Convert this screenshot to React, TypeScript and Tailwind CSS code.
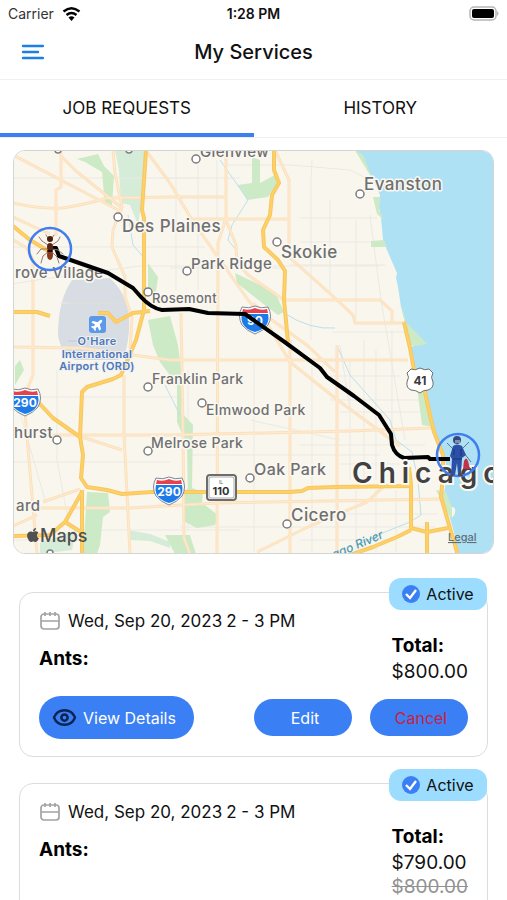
import { Eye } from "lucide-react";
import { FaApple, FaPlane } from "react-icons/fa";

const PARKS = [
  "M77 159L98 154L104 166L114 176L112 205L105 205L102 172L85 162Z",
  "M148 263L158 277L156 292L148 296Z",
  "M148 320L170 316L178 345L181 368L181 412L193 425L192 488L203 492L202 503L218 515L215 525L197 528L185 522L185 492L188 488L187 445L177 422L177 385L160 362L153 345Z",
  "M252 157L260 160L260 183L275 175L277 184L268 197L247 200L238 185L252 183Z",
  "M235 273L275 292L284 312L278 315L262 303L237 283Z",
  "M87 492L108 493L110 512L103 517L100 545L97 554L83 554Z",
  "M15 366L20 360L24 370L15 385Z",
  "M355 150L363 155L373 180L364 165Z",
  "M373 197L380 197L379 210L384 220L377 214Z",
  "M371 241L384 240L387 247L371 247Z",
  "M401 303L406 322L427 344L416 346L409 345Z",
  "M416 380L425 388L434 427L422 425Z",
  "M436 490L446 492L455 515L450 518Z",
  "M165 535L190 535L196 554L175 554Z",
];

const PALE_PARKS = [
  "M115 150L145 150L142 200L138 225L130 205L121 203L119 170Z",
  "M128 530L150 534L170 542L170 548L150 541L130 540Z",
  "M40 543L76 530L72 550L40 554Z",
];

const STREETS = [
  "M12 178H200", "M12 247H205", "M60 303H116", "M12 397H180", "M12 462H170", "M12 284Q60 276 140 266H380",
  "M160 178H240", "M225 165H290L350 170L370 180", "M300 218H377", "M300 242H383", "M290 265H385", "M170 268H280",
  "M176 152V290", "M217 160V218", "M198 155V290", "M312 160L311 180V340", "M330 200V292", "M356 220V320",
  "M370 215L381 300L405 440", "M332 332H405", "M340 345L350 410", "M350 360V480", "M364 340V478", "M376 350V480", "M392 330V440",
  "M188 370V530", "M254 360V552", "M312 360V552", "M330 376H400", "M330 400H420", "M340 412H425", "M300 445H425", "M190 455H380",
  "M180 527H435", "M310 514H437", "M356 490V552", "M376 490V552", "M396 490V552", "M300 540H395", "M57 370V460L70 530",
  "M12 540H90", "M90 530H240", "M250 420L340 440", "M12 385L25 430L45 500", "M340 464H400",
];

const STREAMS = [
  "M220 160L248 200L232 225L228 240L236 250",
  "M284 313Q310 330 335 328",
  "M165 385L180 415",
  "M338 348L350 375L390 420L396 440L412 452L418 480L421 515L410 522L385 532L360 544",
  "M128 215L133 245L146 260",
];

const ROADS = [
  "M13 155L122 212", "M61 150V187L56 190V236", "M62 157L76 171L122 208",
  "M13 203Q40 209 62 208Q84 205 107 198L170 197H226", "M113 150L115 173L122 207L113 230L112 247L125 277V297L132 317L130 350",
  "M13 217L30 225L50 234", "M13 240L27 248L33 260V375L27 390L25 412L30 472L37 554",
  "M147 152L170 183L192 220L215 253L248 300L265 320L290 362L335 398L400 446",
  "M226 150V218L218 243L217 554", "M226 220L236 245L237 262L248 275L284 300", "M192 219H288",
  "M275 150L289 180V257L335 298L353 315L355 323H405", "M283 300H380L392 311V322",
  "M253 303L272 320L308 346L335 372", "M13 347L80 348L170 360H408", "M50 435H170L350 431L432 428", "M40 508H130L217 503L440 499",
  "M181 313L183 432L184 538L190 554", "M124 375V434L130 554", "M290 340V554", "M337 345V554",
  "M82 437L122 450", "M43 502L80 489", "M13 526L37 515", "M257 552L312 525L367 502L383 487",
];

const HIGHWAYS = [
  "M274 150V170L279 183L272 195L270 215L263 230L264 247L278 260L285 271L284 300L288 342",
  "M146 150L142 210L144 218V310L136 340L121 375L113 379L87 387L82 392L80 437L83 455L81 478L87 487L107 490L122 494L152 492H207L290 492L302 491L308 488L335 487L412 486",
  "M13 226L30 240L50 252", "M38 402L53 418L80 437", "M82 492L65 522L50 535L13 536", "M65 522L81 532", "M82 490V554",
  "M98 313H108L116 322L133 313L150 311", "M13 312H37L50 316",
  "M404 322L410 348L414 370L425 392L430 415L434 432L443 455V475L441 497L447 518L455 545L458 556",
  "M409 467L411 485V528L427 532L448 528", "M427 522V554", "M411 530L397 537L373 547L350 555",
];

type Label = { text: string; x: number; y: number; size: string; dot?: [number, number] };

const LABELS: Label[] = [
  { text: "Glenview", x: 200, y: 157, size: "text-[15px]", dot: [196, 159] },
  { text: "Evanston", x: 364, y: 190, size: "text-[17px]", dot: [360, 194] },
  { text: "Des Plaines", x: 122, y: 232, size: "text-[17px]", dot: [118, 217] },
  { text: "Skokie", x: 281, y: 258, size: "text-[17px]", dot: [277, 242] },
  { text: "Park Ridge", x: 191, y: 269, size: "text-[15px]", dot: [187, 271] },
  { text: "Rosemont", x: 152, y: 303, size: "text-[13px]", dot: [148, 292] },
  { text: "rove Village", x: 15, y: 278, size: "text-[15px]" },
  { text: "Franklin Park", x: 152, y: 384, size: "text-[14px]", dot: [148, 387] },
  { text: "Elmwood Park", x: 206, y: 415, size: "text-[14px]", dot: [202, 403] },
  { text: "Melrose Park", x: 151, y: 448, size: "text-[14px]", dot: [148, 451] },
  { text: "hurst", x: 14, y: 438, size: "text-[15px]", dot: [57, 440] },
  { text: "Oak Park", x: 254, y: 475, size: "text-[16px]", dot: [250, 478] },
  { text: "Cicero", x: 291, y: 521, size: "text-[17px]", dot: [287, 524] },
  { text: "ard", x: 16, y: 511, size: "text-[15px]" },
];

const EDGE_DOTS = [[58, 150], [129, 150], [50, 553]];

function Interstate({ x, y, label }: { x: number; y: number; label: string }) {
  return (
    <g transform={`translate(${x} ${y})`}>
      <path d="M-13 -12Q-6 -10 0 -13Q6 -10 13 -12Q18 -3 13 6Q8 12 0 15Q-8 12 -13 6Q-18 -3 -13 -12Z" fill="#fff" stroke="#7b8794" strokeWidth="1" />
      <path d="M-13 -5Q-16 8 0 13Q16 8 13 -5Z" fill="#1c7be8" />
      <path d="M-12 -10Q-6 -8 0 -11Q6 -8 12 -10L13 -6H-13Z" fill="#e5424d" />
      <text y="6" textAnchor="middle" className="fill-white text-[12px] font-bold">{label}</text>
    </g>
  );
}

function Ant() {
  return (
    <g fill="none" strokeLinecap="round">
      <g stroke="#9b7a68" strokeWidth="1">
        <path d="M48 245L42 241L39 237M52 245L58 241L60 237M48 249L41 249L37 254M52 249L58 250L63 254M48 252L43 256L41 263M52 252L57 257L59 263M48 238L46 235M52 238L54 235" />
      </g>
      <ellipse cx="50" cy="239" rx="3" ry="3" fill="#4a1e12" />
      <ellipse cx="50" cy="247" rx="3" ry="4" fill="#5b2515" />
      <ellipse cx="50" cy="255" rx="3" ry="5" fill="#8a3a1a" />
      <path d="M48 251H52" stroke="#1f0d08" strokeWidth="2" />
    </g>
  );
}

function Technician() {
  return (
    <g>
      <path d="M447 443L453 449M469 442L462 449M464 453L471 462" stroke="#66738a" strokeWidth="1" />
      <path d="M464 461Q466 456 468 461L470 469H463Z" fill="#c2334a" />
      <path d="M453 446Q457 443 462 446L466 455L462 458L461 474H458L457 463L455 475H451L452 459L450 456Z" fill="#2c50a8" />
      <path d="M454 449V455M461 449V456M453 459H462" stroke="#1c3272" strokeWidth="1" />
      <circle cx="457" cy="440" r="4" fill="#34487f" />
      <path d="M455 440H460V443H455Z" fill="#8290a8" />
      <path d="M451 474L454 475L452 477H449ZM458 473H461L463 476H458Z" fill="#59464d" />
    </g>
  );
}

function ServiceMap() {
  return (
    <div className="mx-[13px] overflow-hidden rounded-xl border border-[#d3d5d3]">
      <svg viewBox="14 151 479 402" className="block h-auto w-full" role="img" aria-label="Route map to Chicago">
        <rect x="12" y="150" width="484" height="406" fill="#f9f6ee" />
        <path d="M72 280L110 278Q122 290 125 300Q133 320 126 350L118 360H75Q60 352 58 335Q58 300 72 280Z" fill="#d8dde4" />
        <path d="M68 303H116M68 341H116" stroke="#c3c9d1" />
        {PALE_PARKS.map((d) => <path key={d} d={d} fill="#d5ecd9" />)}
        <g fill="none" stroke="#ebe9e3">{STREETS.map((d) => <path key={d} d={d} />)}</g>
        <path d="M355 150L363 163L373 180L380 195L379 207L381 218L383 240L387 250L397 273L396 278L398 287L401 307L405 322L408 337L417 344L410 348L415 368L425 388L430 408L434 425L438 442L445 455L447 478L444 492L447 508L454 532L459 556H498V148Z" fill="#aee1f3" />
        {PARKS.map((d) => <path key={d} d={d} fill="#cdeac6" />)}
        <path d="M452 507Q456 507 455 513L452 518Z" fill="#f9f6ee" />
        <g fill="none" stroke="#bce0ea" strokeWidth="1">{STREAMS.map((d) => <path key={d} d={d} />)}</g>
        <g fill="none" strokeLinejoin="round">
          <g stroke="#fce0bb" strokeWidth="3">{ROADS.map((d) => <path key={d} d={d} />)}</g>
          <g stroke="#fdecd3" strokeWidth="1">{ROADS.map((d) => <path key={d} d={d} />)}</g>
          <g stroke="#f8c563" strokeWidth="4">{HIGHWAYS.map((d) => <path key={d} d={d} />)}</g>
          <g stroke="#fdd162" strokeWidth="2">{HIGHWAYS.map((d) => <path key={d} d={d} />)}</g>
        </g>

        <g className="fill-[#6f6f6f] font-medium" stroke="#faf8f2" strokeWidth="3" strokeLinejoin="round" paintOrder="stroke">
          {LABELS.map((l) => <text key={l.text} x={l.x} y={l.y} className={`${l.size} tracking-wide`}>{l.text}</text>)}
        </g>
        {LABELS.map((l) => l.dot && <circle key={l.text} cx={l.dot[0]} cy={l.dot[1]} r="4" fill="#fff" stroke="#7c7c7c" strokeWidth="1.5" />)}
        {EDGE_DOTS.map(([x, y]) => <circle key={x} cx={x} cy={y} r="3" fill="#fff" stroke="#7c7c7c" strokeWidth="1.5" />)}

        <rect x="89" y="316" width="17" height="17" rx="3" fill="#5b9ae8" />
        <g transform="rotate(-45 97.5 324.5)"><FaPlane x="91" y="318" size={13} color="#fff" /></g>
        <g textAnchor="middle" className="fill-[#4f78b9] text-[11px] font-semibold tracking-wide" stroke="#eef0f2" strokeWidth="2" paintOrder="stroke">
          <text x="97" y="345">O'Hare</text>
          <text x="97" y="358">International</text>
          <text x="97" y="370">Airport (ORD)</text>
        </g>
        <text x="334" y="559" transform="rotate(-23 334 559)" className="fill-[#4b9ab5] text-[12px] font-medium italic">ago River</text>

        <Interstate x={255} y={319} label="90" />
        <Interstate x={25} y={401} label="290" />
        <Interstate x={169} y={490} label="290" />
        <rect x="207" y="475" width="29" height="25" rx="3" fill="#fff" stroke="#6c6c6c" strokeWidth="2" />
        <rect x="209" y="477" width="25" height="21" rx="2" fill="none" stroke="#aaa" />
        <text x="221" y="484" textAnchor="middle" className="fill-[#555] text-[5px]">IL</text>
        <text x="221" y="495" textAnchor="middle" className="fill-[#333] text-[11px] font-bold">110</text>
        <path d="M411 369Q415 371 420 368Q425 371 429 369L433 373Q430 377 433 382Q434 388 428 390Q423 390 420 393Q416 390 411 390Q406 388 407 382Q410 377 407 373Z" fill="#fff" stroke="#6f6f6f" />
        <text x="420" y="385" textAnchor="middle" className="fill-[#3b3b3b] text-[12px] font-bold">41</text>

        <path d="M50 248L56 248L59 256L108 273L133 288L141 297Q151 308 162 310L189 309L208 313L245 314L286 343L320 368L327 377L354 396L379 415L391 434L392 445Q395 455 404 458L428 457L430 459H450" fill="none" stroke="#000" strokeWidth="4" strokeLinejoin="round" />
        <text x="352" y="483" stroke="#faf8f2" strokeWidth="4" paintOrder="stroke" className="fill-[#414141] text-[28px] font-semibold tracking-[6px]">Chicago</text>
        <circle cx="50" cy="249" r="21" fill="none" stroke="#3f7df0" strokeWidth="2.5" />
        <Ant />
        <circle cx="458" cy="455" r="21" fill="none" stroke="#3f7df0" strokeWidth="2.5" />
        <Technician />

        <FaApple x="25" y="527" size={16} color="#505050" />
        <text x="40" y="542" className="fill-[#505050] text-[18px] font-medium">Maps</text>
        <a href="#legal"><text x="448" y="541" className="fill-[#5f7078] text-[11px] font-medium underline">Legal</text></a>
      </svg>
    </div>
  );
}

function CalendarIcon() {
  return (
    <svg width="22" height="20" viewBox="0 0 22 20" fill="none" stroke="#a3a3a3" strokeWidth="1.7" aria-hidden="true">
      <rect x="2" y="3" width="18" height="15" rx="3" />
      <path d="M2 10H20M6 1V5M11 1V5M16 1V5" />
    </svg>
  );
}

function ServiceCard({ total, previous }: { total: string; previous?: string }) {
  return (
    <article className="relative mx-[19px] rounded-[14px] border border-[#dcdcdc] px-[19px] pt-4 pb-[17px]">
      <div className="absolute -top-[15px] right-0 flex h-8 w-[98px] items-center justify-center gap-1.5 rounded-xl bg-[#9bdcff]">
        <svg width="18" height="18" viewBox="0 0 18 18" aria-hidden="true">
          <circle cx="9" cy="9" r="9" fill="#3b7ff5" />
          <path d="M4 9L8 13L14 5" fill="none" stroke="#fff" strokeWidth="2.4" />
        </svg>
        <span className="text-[16px]">Active</span>
      </div>
      <div className="flex justify-between">
        <div>
          <p className="flex items-center text-[17px] leading-6">
            <CalendarIcon />
            <span className="ml-[7px]">Wed, Sep 20, 2023</span>
            <span className="ml-1">2 - 3 PM</span>
          </p>
          <h2 className="mt-[14px] text-[19px] leading-6 font-bold text-black">Ants:</h2>
        </div>
        <div className="mt-6 text-[19px] leading-[26px]">
          <p className="font-bold text-black">Total:</p>
          <p>{total}</p>
          {previous && <p className="leading-[22px] text-[#929292] line-through">{previous}</p>}
        </div>
      </div>
      <div className="mt-[11px] flex items-center justify-between text-[16px] text-white">
        <button className="flex h-[43px] w-[155px] items-center gap-1.5 rounded-full bg-[#3b7ff5] px-[13px]">
          <Eye size={25} strokeWidth={2.4} color="#0b2350" />
          View Details
        </button>
        <div className="flex gap-[18px]">
          <button className="h-[37px] w-[98px] rounded-full bg-[#3b7ff5] pl-1">Edit</button>
          <button className="h-[37px] w-[98px] rounded-full bg-[#3b7ff5] pl-1 text-[#c81f42]">Cancel</button>
        </div>
      </div>
    </article>
  );
}

export default function App() {
  return (
    <div className="flex h-screen flex-col overflow-hidden bg-white font-['Inter','Liberation_Sans',sans-serif] text-[#111]">
      <div className="grid h-[27px] shrink-0 grid-cols-3 items-center px-2 text-[14px]">
        <span className="flex items-center gap-2 text-[#333]">
          Carrier
          <svg width="19" height="14" viewBox="0 0 18 14" fill="none" stroke="#000" strokeWidth="2.4" aria-label="Wi-Fi">
            <path d="M1 4.500Q9 -2 17 4.500M4 8Q9 4 14 8" />
            <path d="M6 10.500Q9 8 12 10.500L9 14Z" fill="#000" stroke="none" />
          </svg>
        </span>
        <span className="text-center font-semibold">1:28 PM</span>
        <svg className="justify-self-end" width="30" height="15" viewBox="0 0 30 15" aria-label="Battery">
          <rect x="1" y="1" width="26" height="13" rx="4" fill="#fff" stroke="#b5b5b5" strokeWidth="1.500" />
          <rect x="3" y="3" width="22" height="9" rx="2" fill="#000" />
          <path d="M28 5Q31 7.500 28 10Z" fill="#b5b5b5" />
        </svg>
      </div>
      <header className="grid h-[53px] shrink-0 grid-cols-[1fr_auto_1fr] items-center border-b border-[#f0f0f0] px-5 pb-[3px]">
        <button aria-label="Open menu" className="w-fit">
          <svg width="24" height="18" viewBox="0 0 24 18" stroke="#1a80e8" strokeWidth="2.4" strokeLinecap="round">
            <path d="M3 3H23M3 9H18M3 15H23" />
          </svg>
        </button>
        <h1 className="text-[20px] font-medium">My Services</h1>
      </header>
      <nav className="grid h-[58px] shrink-0 grid-cols-2 border-b border-[#f0f0f0] text-[17px]" role="tablist">
        <button role="tab" aria-selected="true" className="border-b-4 border-[#3b7ff5] pt-[5px]">JOB REQUESTS</button>
        <button role="tab" aria-selected="false" className="border-b-4 border-transparent pt-[5px]">HISTORY</button>
      </nav>
      <main className="min-h-0 flex-1 overflow-y-auto pt-3 [scrollbar-width:none]">
        <ServiceMap />
        <div className="flex flex-col gap-[26px] pt-[38px] pb-6">
          <ServiceCard total="$800.00" />
          <ServiceCard total="$790.00" previous="$800.00" />
        </div>
      </main>
    </div>
  );
}
